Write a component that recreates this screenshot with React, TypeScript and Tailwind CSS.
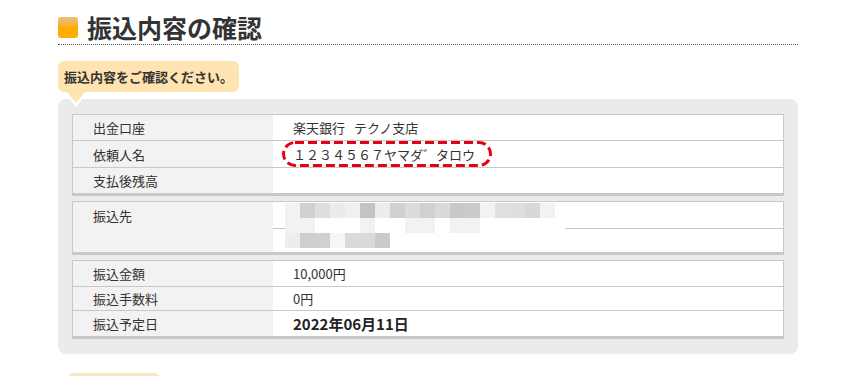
import React from "react";

const mosaicA = [
  "#f2f2f2", "#d0d0d0", "#dedede", "#ebebeb", "#f3efeb", "#c3c3c3",
  "#ececec", "#d0d0d0", "#dcdcdc", "#d0d0d0", "#dadada", "#c8c8c8",
  "#cbcbcb", "#f2f2f2", "#e0e0e0", "#dedede", "#d8d8d8", "#f2f2f2",
];
const mosaicB = [
  "#f2f2f2", "#f2f2f2", "#ffffff", "#ffffff", "#ffffff", "#f2f2f2",
  "#ffffff", "#ffffff", "#f2f2f2", "#f2f2f2", "#ffffff", "#f2f2f2",
  "#f2f2f2", "#ffffff", "#ffffff", "#ffffff", "#ffffff", "#ffffff",
];
const mosaicC = ["#f0ece8", "#ccd0d3", "#d0d0cd", "#f5f7f5", "#dadad8", "#dadad8", "#cbcbcd"];

const Row = ({ label, children, h, top = true }: { label: string; children?: React.ReactNode; h: string; top?: boolean }) => (
  <div className={`flex ${h} ${top ? "border-t border-[#c8c8c8]" : ""}`}>
    <div className="flex w-[200px] items-center bg-[#f2f2f2] pl-[20px]">{label}</div>
    <div className="relative flex flex-1 items-center pl-[20px]">{children}</div>
  </div>
);

const MosaicRow = ({ colors }: { colors: string[] }) => (
  <div className="flex h-[15px]">
    {colors.map((c, i) => (
      <div key={i} className="h-[15px] w-[15px]" style={{ backgroundColor: c }} />
    ))}
  </div>
);

export default function App() {
  return (
    <div className="min-h-[376px] bg-white font-['Noto_Sans_CJK_JP','Noto_Sans',sans-serif] text-[13px] leading-none text-[#333]">
      <div className="ml-[58px] w-[740px] pt-[12px]">
        {/* title */}
        <div className="flex h-[33px] items-center gap-[9px] border-b border-dotted border-[#555] pb-[1px]">
          <div className="h-[21px] w-[20px] rounded-[3px] bg-gradient-to-b from-[#e4c27c] via-[#ffad00] to-[#ffad00]" />
          <h1 className="text-[25px] font-bold text-[#333]">振込内容の確認</h1>
        </div>

        {/* bubble */}
        <div className="relative z-10 mt-[16px] flex h-[31px] w-[181px] items-center rounded-[6px] bg-[#ffe3b0] pl-[6px] text-[13px] font-bold text-[#333]">
          振込内容をご確認ください。
          <svg className="absolute left-[6px] top-full" width="24" height="16" viewBox="0 0 24 16">
            <polygon points="0,0 24,0 12,15" fill="#ffffff" />
            <polygon points="3,0 21,0 12,11" fill="#ffe3b0" />
          </svg>
        </div>

        {/* panel */}
        <div className="mt-[7px] flex flex-col gap-[5px] rounded-[8px] bg-[#ebebeb] px-[14px] py-[15px]">
          <div className="border-x border-t border-b-[3px] border-[#c8c8c8] bg-white">
            <Row label="出金口座" h="h-[25px]" top={false}>
              楽天銀行<span className="ml-[9px]">テクノ支店</span>
            </Row>
            <Row label="依頼人名" h="h-[27px]">
              <span>１２３４５６７ヤマダ゛タロウ</span>
              <svg className="absolute left-[9px] top-0" width="210" height="26" viewBox="0 0 210 26">
                <rect x="1.5" y="1.5" width="207" height="23" rx="11.5" fill="none" stroke="#e60012" strokeWidth="3" strokeDasharray="9 4" />
              </svg>
            </Row>
            <Row label="支払後残高" h="h-[26px]" />
          </div>

          <div className="flex border-x border-t border-b-[3px] border-[#c8c8c8] bg-white">
            <div className="w-[200px] bg-[#f2f2f2] pl-[20px]">
              <div className="flex h-[26px] items-center">振込先</div>
            </div>
            <div className="relative flex-1">
              <div className="h-[27px] border-b border-[#c8c8c8]" />
              <div className="h-[23px]" />
              <div className="absolute left-[12px] top-[1px] w-[280px] bg-white">
                <MosaicRow colors={mosaicA} />
                <MosaicRow colors={mosaicB} />
                <MosaicRow colors={mosaicC} />
              </div>
            </div>
          </div>

          <div className="border-x border-t border-b-[3px] border-[#c8c8c8] bg-white">
            <Row label="振込金額" h="h-[25px]" top={false}>10,000円</Row>
            <Row label="振込手数料" h="h-[24px]">0円</Row>
            <Row label="振込予定日" h="h-[26px]">
              <span className="text-[15px] font-bold text-[#222]">2022年06月11日</span>
            </Row>
          </div>
        </div>

        <div className="ml-[10px] mt-[19px] h-[30px] w-[92px] rounded-[6px] bg-[#f7e6c2]" />
      </div>
    </div>
  );
}
